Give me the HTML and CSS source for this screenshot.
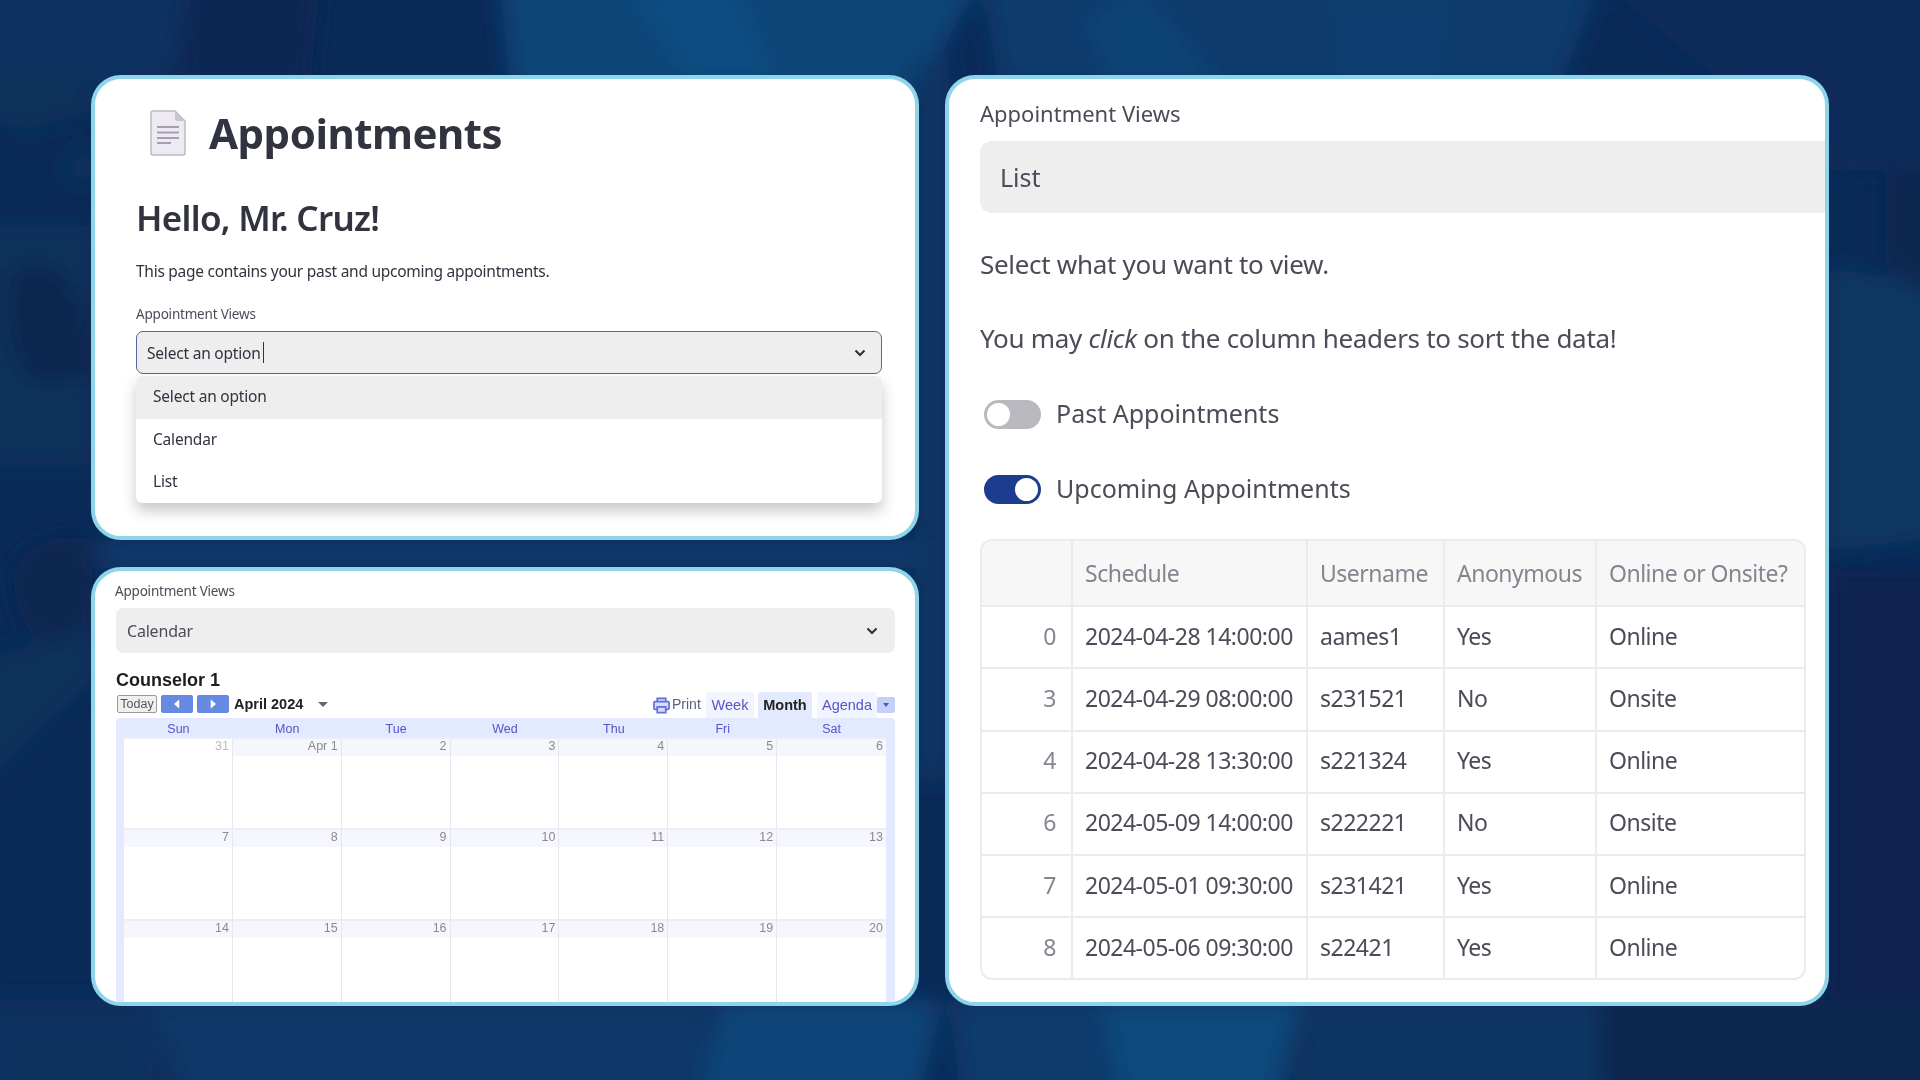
FILE: index.html
```html
<!DOCTYPE html>
<html lang="en">
<head>
  <meta charset="UTF-8" />
  <title>Appointments</title>
  <link rel="stylesheet" href="styles.css">
</head>
<body>
  <!-- blurred photo collage behind the cards -->
  <svg class="backdrop" viewBox="0 0 1920 1080" width="1920" height="1080" aria-hidden="true">
    <defs><filter id="soft" x="-10%" y="-10%" width="120%" height="120%"><feGaussianBlur stdDeviation="11"/></filter></defs>
    <rect width="1920" height="1080" fill="#0a2a58"/>
    <g filter="url(#soft)">
      <path d="M-20-20h210l-20 100L-20 100z" fill="#0c3262"/>
      <path d="M500-20h480l-60 110H510z" fill="#0b4477"/>
      <path d="M620-20h120l40 110h-90z" fill="#0c4c80"/>
      <path d="M980-20h620l-40 110H1000z" fill="#0b3a6c"/>
      <path d="M1080 20l60-40 90 110h-120z" fill="#0b4274"/>
      <path d="M1320-20h140l-20 110h-100z" fill="#0b3c6e"/>
      <path d="M190-20h130l-10 110H180z" fill="#092552"/>
      <path d="M1600-20h340v190h-110z" fill="#0a2c5a"/>
      <path d="M-20 70h112v40L30 130l-50-10z" fill="#0c315c"/>
      <path d="M60 170l32-25v40z" fill="#0d355f"/>
      <path d="M-20 225h112v240H-20z" fill="#0b305c"/>
      <path d="M12 270q30-15 55 10 20 30 25 70v30H30Q0 340 12 270z" fill="#0a2550"/>
      <path d="M14 570q20-40 78-30v80L50 650Q10 620 14 570z" fill="#0a2550"/>
      <path d="M-20 660l112-30v50L-20 790z" fill="#0b305c"/>
      <path d="M1885 170h55v130l-55-40z" fill="#0a2550"/>
      <path d="M1829 268l60 10 51 20v240l-111 12z" fill="#0c3864"/>
      <path d="M1829 570h111v530h-111z" fill="#0a2450"/>
      <path d="M915 60h34v720h-34z" fill="#0b3563"/>
      <path d="M100 540h820v28H100z" fill="#0a3a6c"/>
      <path d="M-20 1000h180v100H-20z" fill="#0a3260"/>
      <path d="M150 1000h560v100H180z" fill="#0a3868"/>
      <path d="M720 1000h220l-20 100H700z" fill="#0b4578"/>
      <path d="M950 1000h150l30 100H960z" fill="#0b3a6c"/>
      <path d="M1100 1000h200l-20 100h-160z" fill="#0c487b"/>
      <path d="M1300 1000h300v100h-300z" fill="#0a3564"/>
      <path d="M1600 1000h340v100h-340z" fill="#0a2550"/>
    </g>
  </svg>

  <main class="board">

    <section class="card card-menu">
      <div class="title-row">
        <svg class="doc-icon" viewBox="0 0 36 46" width="36" height="46">
          <path d="M3 1h22l10 10v32a2 2 0 0 1-2 2H3a2 2 0 0 1-2-2V3a2 2 0 0 1 2-2z" fill="#eeeaf4" stroke="#bdb9c4" stroke-width="1.5"/>
          <path d="M25 1v8a2 2 0 0 0 2 2h8z" fill="#c9c5cf"/>
          <path d="M7 17h22M7 22.500h22M7 28h22M7 33h14" stroke="#a79fae" stroke-width="1.800"/>
        </svg>
        <h1>Appointments</h1>
      </div>
      <h2>Hello, Mr. Cruz!</h2>
      <p class="intro">This page contains your past and upcoming appointments.</p>
      <label class="small-label">Appointment Views</label>
      <div class="select select-focus">
        <span>Select an option</span><i class="caret"></i>
        <svg class="chevron" viewBox="0 0 12 8" width="12" height="8"><path d="M1.500 1.500 6 6l4.500-4.500" fill="none" stroke="#31333f" stroke-width="2.200"/></svg>
      </div>
      <ul class="dropdown">
        <li class="active">Select an option</li>
        <li>Calendar</li>
        <li>List</li>
      </ul>
    </section>

    <section class="card card-calendar">
      <label class="small-label">Appointment Views</label>
      <div class="select select-cal">
        <span>Calendar</span>
        <svg class="chevron" viewBox="0 0 12 8" width="12" height="8"><path d="M1.500 1.500 6 6l4.500-4.500" fill="none" stroke="#31333f" stroke-width="2.200"/></svg>
      </div>
      <div class="cal-title">Counselor 1</div>
      <div class="cal-toolbar">
        <div class="cal-nav">
          <button class="btn-today">Today</button>
          <button class="btn-arrow"><svg viewBox="0 0 8 12" width="6" height="10"><path d="M7 0v12L0 6z" fill="#fff"/></svg></button>
          <button class="btn-arrow"><svg viewBox="0 0 8 12" width="6" height="10"><path d="M1 0v12l7-6z" fill="#fff"/></svg></button>
          <span class="cal-month">April 2024</span>
          <i class="tri"></i>
        </div>
        <div class="cal-tabs">
          <svg class="print-icon" viewBox="0 0 18 18" width="17" height="17">
            <path d="M4.500 5V1.500h9V5M4.500 13H2a1 1 0 0 1-1-1V6a1 1 0 0 1 1-1h14a1 1 0 0 1 1 1v6a1 1 0 0 1-1 1h-2.500M4.500 10.500h9v6h-9z" fill="#d6dcfa" stroke="#5f6fdc" stroke-width="1.800"/>
          </svg>
          <span class="print">Print</span>
          <span class="tab tab-week">Week</span>
          <span class="tab tab-month">Month</span>
          <span class="tab tab-agenda">Agenda</span>
          <span class="tab-menu"><i></i></span>
        </div>
      </div>
      <div class="cal">
        <div class="cal-head">
          <span>Sun</span><span>Mon</span><span>Tue</span><span>Wed</span><span>Thu</span><span>Fri</span><span>Sat</span>
        </div>
        <div class="cal-week">
          <div class="day off"><b>31</b></div><div class="day"><b>Apr 1</b></div><div class="day"><b>2</b></div><div class="day"><b>3</b></div><div class="day"><b>4</b></div><div class="day"><b>5</b></div><div class="day"><b>6</b></div>
        </div>
        <div class="cal-week">
          <div class="day"><b>7</b></div><div class="day"><b>8</b></div><div class="day"><b>9</b></div><div class="day"><b>10</b></div><div class="day"><b>11</b></div><div class="day"><b>12</b></div><div class="day"><b>13</b></div>
        </div>
        <div class="cal-week">
          <div class="day"><b>14</b></div><div class="day"><b>15</b></div><div class="day"><b>16</b></div><div class="day"><b>17</b></div><div class="day"><b>18</b></div><div class="day"><b>19</b></div><div class="day"><b>20</b></div>
        </div>
      </div>
    </section>

    <section class="card card-list">
      <label class="big-label">Appointment Views</label>
      <div class="select select-list"><span>List</span></div>
      <p class="note note-first">Select what you want to view.</p>
      <p class="note note-second">You may <em>click</em> on the column headers to sort the data!</p>
      <div class="toggle-row toggle-first"><span class="toggle"></span><span class="toggle-text">Past Appointments</span></div>
      <div class="toggle-row toggle-second"><span class="toggle on"></span><span class="toggle-text">Upcoming Appointments</span></div>
      <div class="table-wrap">
        <table>
          <colgroup><col class="c-idx"><col class="c-sched"><col class="c-user"><col class="c-anon"><col class="c-mode"></colgroup>
          <thead>
            <tr><th></th><th>Schedule</th><th>Username</th><th>Anonymous</th><th>Online or Onsite?</th></tr>
          </thead>
          <tbody>
            <tr><td class="idx">0</td><td>2024-04-28 14:00:00</td><td>aames1</td><td>Yes</td><td>Online</td></tr>
            <tr><td class="idx">3</td><td>2024-04-29 08:00:00</td><td>s231521</td><td>No</td><td>Onsite</td></tr>
            <tr><td class="idx">4</td><td>2024-04-28 13:30:00</td><td>s221324</td><td>Yes</td><td>Online</td></tr>
            <tr><td class="idx">6</td><td>2024-05-09 14:00:00</td><td>s222221</td><td>No</td><td>Onsite</td></tr>
            <tr><td class="idx">7</td><td>2024-05-01 09:30:00</td><td>s231421</td><td>Yes</td><td>Online</td></tr>
            <tr><td class="idx">8</td><td>2024-05-06 09:30:00</td><td>s22421</td><td>Yes</td><td>Online</td></tr>
          </tbody>
        </table>
      </div>
    </section>

  </main>
</body>
</html>
```

FILE: styles.css
```css
:root {
  --ink: #31333f;
  --ink-soft: #4a4c57;
  --muted: #83868f;
  --field: #eeeeef;
  --line: #ebebee;
  --sky: #8fd5ea;
  --cal-blue: #e3e9fe;
  --cal-link: #5a52c6;
}

* {
  box-sizing: border-box;
}

html, body {
  margin: 0;
  height: 100%;
}

body {
  position: relative;
  font-family: "Noto Sans", "Lato", sans-serif;
  color: var(--ink);
  overflow: hidden;
  background: #0a2a58;
}

.backdrop {
  position: absolute;
  top: 0;
  left: 0;
}

.board {
  position: relative;
  display: grid;
  grid-template-columns: 828px 884px;
  grid-template-rows: 465px 439px;
  gap: 27px 26px;
  padding: 75px 0 0 91px;
}

.card {
  background: #fff;
  border: 4px solid var(--sky);
  border-radius: 30px;
  overflow: hidden;
}

/* top left card */
.card-menu {
  padding: 31px 33px 0 41px;
  filter: blur(0.35px);
}

.title-row {
  display: flex;
  align-items: center;
  gap: 23px;
  height: 46px;
  margin-left: 14px;
}

h1 {
  margin: 0;
  font-size: 42px;
  font-weight: 700;
  line-height: 46px;
  letter-spacing: -0.5px;
}

h2 {
  margin: 39px 0 0;
  font-size: 35px;
  font-weight: 600;
  line-height: 46px;
  letter-spacing: -0.7px;
}

.intro {
  margin: 18px 0 0;
  font-size: 15.500px;
  line-height: 24px;
  letter-spacing: -0.27px;
}

.small-label {
  display: block;
  margin-top: 21px;
  font-size: 13.500px;
  line-height: 20px;
  letter-spacing: -0.2px;
  color: var(--ink-soft);
}

.select {
  display: flex;
  align-items: center;
  justify-content: space-between;
  background: var(--field);
  border-radius: 7px;
}

.select-focus {
  justify-content: flex-start;
  height: 43px;
  margin-top: 7px;
  padding: 0 15px 0 10px;
  border: 1.5px solid #4d6b9c;
  font-size: 15.500px;
  letter-spacing: -0.2px;
}

.select-focus .chevron {
  margin-left: auto;
}

.caret {
  width: 1px;
  height: 21px;
  margin-left: 2px;
  background: var(--ink);
}

.dropdown {
  margin: 2px 0 0;
  padding: 0;
  height: 127px;
  list-style: none;
  background: #fff;
  border-radius: 6px;
  overflow: hidden;
  font-size: 15.500px;
  letter-spacing: -0.2px;
  box-shadow: 0 8px 14px rgba(40, 40, 60, 0.25);
}

.dropdown li {
  height: 42.500px;
  padding: 0 17px;
  line-height: 40px;
}

.dropdown .active {
  background: var(--field);
}

/* bottom left card */
.card-calendar {
  padding: 11px 20px 0 21px;
  filter: blur(0.45px);
}

.card-calendar .small-label {
  margin: 0 0 0 -1px;
  line-height: 18px;
}

.select-cal {
  height: 45px;
  margin-top: 8px;
  padding: 0 17px 0 11px;
  font-size: 16px;
  letter-spacing: -0.2px;
  color: var(--ink-soft);
}

.cal-title {
  margin-top: 17px;
  font-family: "Liberation Sans", Arial, sans-serif;
  font-size: 18px;
  font-weight: 700;
  line-height: 20px;
  color: #1d1d1f;
}

.cal-toolbar {
  display: flex;
  justify-content: space-between;
  height: 28px;
  font-family: "Liberation Sans", Arial, sans-serif;
}

.cal-nav {
  display: flex;
  align-items: center;
  gap: 4px;
  height: 18px;
  margin: 5px 0 0 1px;
}

.cal-nav button {
  display: flex;
  align-items: center;
  justify-content: center;
  height: 18px;
  padding: 0;
  border-radius: 2px;
}

.btn-today {
  width: 40px;
  background: #f0f0f0;
  border: 1px solid #9a9a9a;
  font-family: inherit;
  font-size: 12.500px;
  color: #555;
}

.btn-arrow {
  width: 32px;
  background: #668ae2;
  border: none;
}

.cal-month {
  margin-left: 1px;
  font-size: 14.500px;
  font-weight: 700;
  color: #222;
}

.tri {
  margin-left: 11px;
  border-top: 5px solid #666;
  border-left: 5px solid transparent;
  border-right: 5px solid transparent;
}

.cal-tabs {
  display: flex;
  margin-top: 2px;
  font-size: 14.500px;
  color: var(--cal-link);
}

.print-icon {
  margin-top: 5px;
}

.print {
  width: 30px;
  margin: 4px 0 0 2px;
  font-size: 14px;
  color: #5a5f7a;
}

.tab {
  height: 26px;
  margin-left: 4px;
  padding-top: 5px;
  text-align: center;
  background: #f3f5fe;
  border-radius: 3px 3px 0 0;
}

.tab-week {
  width: 48px;
}

.tab-month {
  width: 54px;
  font-weight: 700;
  color: #222;
  background: var(--cal-blue);
}

.tab-agenda {
  width: 60px;
  margin-left: 5px;
}

.tab-menu {
  display: flex;
  align-items: center;
  justify-content: center;
  width: 18px;
  height: 16px;
  margin-top: 5px;
  background: #c4d0f7;
  border-radius: 2px;
}

.tab-menu i {
  border-top: 4px solid #5a52c6;
  border-left: 3px solid transparent;
  border-right: 3px solid transparent;
}

.cal {
  padding: 0 9px 0 8px;
  background: var(--cal-blue);
  border-radius: 4px 4px 0 0;
  font-family: "Liberation Sans", Arial, sans-serif;
}

.cal-head {
  display: grid;
  grid-template-columns: repeat(7, 1fr);
  height: 19px;
  font-size: 12.500px;
  line-height: 22px;
  text-align: center;
  color: var(--cal-link);
}

.cal-week {
  display: grid;
  grid-template-columns: repeat(7, 1fr);
  height: 91px;
  background: #fff;
  border-top: 2px solid #eceef6;
}

.cal-week:first-of-type {
  border-top: none;
}

.day {
  border-right: 1px solid #e6e7ee;
}

.day:last-child {
  border-right: none;
}

.day b {
  display: block;
  height: 17px;
  padding-right: 3px;
  font-size: 12.500px;
  font-weight: 400;
  line-height: 14px;
  text-align: right;
  color: #8a8a8f;
  background: #f6f7fd;
}

.day.off b {
  background: #fff;
  color: #bcbcc0;
}

/* right card */
.card-list {
  grid-column: 2;
  grid-row: 1 / span 2;
  padding: 20px 19px 0 31px;
  filter: blur(0.6px);
}

.big-label {
  display: block;
  font-size: 22px;
  line-height: 28px;
  color: var(--ink-soft);
}

.select-list {
  height: 72px;
  margin: 14px -30px 0 0;
  padding: 0 20px;
  border-radius: 12px;
  font-size: 25px;
  color: var(--ink-soft);
}

.note {
  margin: 0;
  font-size: 26px;
  line-height: 36px;
  letter-spacing: -0.3px;
  color: var(--ink-soft);
}

.note-first {
  margin-top: 33px;
}

.note-second {
  margin-top: 38px;
}

.toggle-row {
  display: flex;
  align-items: center;
  gap: 15px;
  height: 29px;
  padding-left: 4px;
  font-size: 25px;
  color: var(--ink-soft);
}

.toggle-first {
  margin-top: 44px;
}

.toggle-second {
  margin-top: 46px;
}

.toggle-text {
  margin-top: -4px;
}

.toggle {
  display: flex;
  align-items: center;
  width: 57px;
  height: 29px;
  padding: 0 3px;
  background: #b9b9bf;
  border-radius: 15px;
}

.toggle::before {
  content: "";
  width: 23px;
  height: 23px;
  background: #fff;
  border-radius: 50%;
}

.toggle.on {
  justify-content: flex-end;
  background: #1c3d8f;
}

.table-wrap {
  height: 441px;
  margin-top: 35px;
  border: 2px solid var(--line);
  border-radius: 12px;
  overflow: hidden;
}

table {
  width: 100%;
  height: 100%;
  border-collapse: collapse;
  table-layout: fixed;
  font-size: 23px;
  letter-spacing: -0.5px;
  color: var(--ink-soft);
}

.c-idx { width: 90px; }
.c-sched { width: 235px; }
.c-user { width: 137px; }
.c-anon { width: 152px; }

th, td {
  padding: 0 12px;
  border: 2px solid var(--line);
  text-align: left;
  white-space: nowrap;
  overflow: hidden;
}

td {
  padding-bottom: 3px;
}

tr > :first-child { border-left: none; }
tr > :last-child { border-right: none; }
thead th { border-top: none; }
tbody tr:last-child td { border-bottom: none; }

th {
  height: 65px;
  font-weight: 400;
  color: var(--muted);
  background: #f7f7f8;
}

.idx {
  padding-right: 15px;
  text-align: right;
  color: var(--muted);
}
```
